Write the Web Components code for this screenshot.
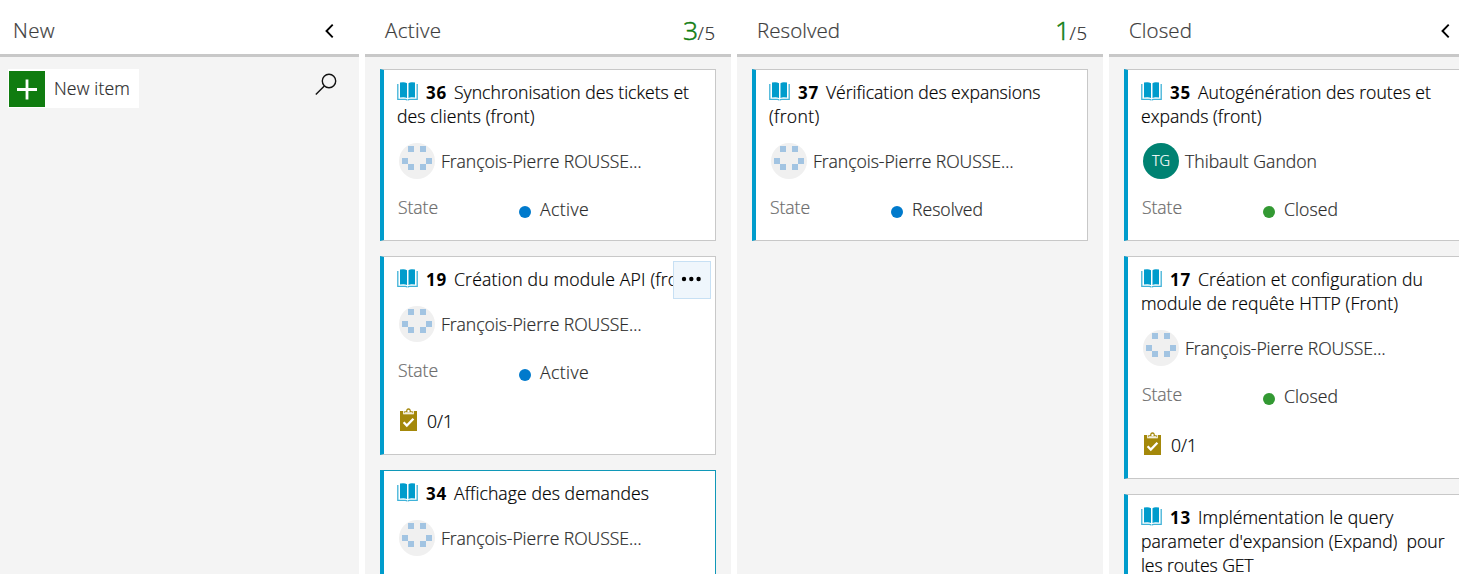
<!DOCTYPE html>
<html lang="fr">
<head>
<meta charset="utf-8">
<title>Board</title>
<style>
html,body{margin:0;height:100%;overflow:hidden;background:#fff}
body{font:300 17.6px/24px "Open Sans","Noto Sans",sans-serif;color:#2b2b2b;-webkit-text-stroke:.22px}
</style>
</head>
<body>
<kanban-board>
  <board-column heading="New" hw="42" collapsible style="--w:359px">
    <new-item-bar></new-item-bar>
  </board-column>
  <board-column heading="Active" hw="56.5" count="3" limit="5">
    <work-card person="fp" state="Active" sw="49">
      <title-line num="36" w="235">Synchronisation des tickets et</title-line>
      <title-line w="137.5">des clients (front)</title-line>
    </work-card>
    <work-card person="fp" state="Active" sw="49" tasks="0/1" menu>
      <title-line num="19" w="246">Création du module API (front)</title-line>
    </work-card>
    <work-card person="fp" selected>
      <title-line num="34" w="195">Affichage des demandes</title-line>
    </work-card>
  </board-column>
  <board-column heading="Resolved" hw="83" count="1" limit="5">
    <work-card person="fp" state="Resolved" sw="71">
      <title-line num="37" w="214.5">Vérification des expansions</title-line>
      <title-line w="50.5">(front)</title-line>
    </work-card>
  </board-column>
  <board-column heading="Closed" hw="63" collapsible>
    <work-card person="tg" state="Closed" sw="54">
      <title-line num="35" w="233">Autogénération des routes et</title-line>
      <title-line w="120.5">expands (front)</title-line>
    </work-card>
    <work-card person="fp" state="Closed" sw="54" tasks="0/1">
      <title-line num="17" w="225">Création et configuration du</title-line>
      <title-line w="257">module de requête HTTP (Front)</title-line>
    </work-card>
    <work-card>
      <title-line num="13" w="195.5">Implémentation le query</title-line>
      <title-line w="303.5">parameter d'expansion (Expand)&nbsp; pour</title-line>
      <title-line w="112.5">les routes GET</title-line>
    </work-card>
  </board-column>
</kanban-board>
<script>
const define = (name, render, after) => customElements.define(name, class extends HTMLElement {
  connectedCallback() {
    if (this.shadowRoot) return;
    this.attachShadow({ mode: 'open' }).innerHTML = render(this);
    if (after) after(this);
  }
});

/* A single line of text tracked so that it fills the given width. */
define('fit-text', () => `<style>:host{display:inline-block;white-space:pre}span{display:inline-block}</style><span><slot></slot></span>`, el => {
  const span = el.shadowRoot.querySelector('span'), w = +el.getAttribute('w');
  el.style.width = w + 'px';
  const n = el.textContent.length;
  span.style.letterSpacing = ((w - span.getBoundingClientRect().width) / n).toFixed(3) + 'px';
});

define('book-icon', () => `<style>:host{display:block;width:21px;height:19px}svg{display:block}</style>
<svg width="21" height="19" viewBox="0 0 21 19">
<path d="M.8 2v15.3h7.6q1.2 0 1.6.9M20.2 2v15.3h-7.6q-1.2 0-1.6.9" fill="none" stroke="#3fb2d8" stroke-width="1.3"/>
<path d="M3 .6Q7.5-.4 10 1.2V16Q7.500 14.700 3 15.600zM18 .6Q13.500-.4 11.500 1.200V16Q13.500 14.700 18 15.600z" fill="#009ccc"/></svg>`);

define('task-icon', () => `<style>:host{display:block;width:17px;height:23px}svg{display:block}</style>
<svg width="17" height="23" viewBox="0 0 17 23">
<path d="M0 3h17v20H0z" fill="#a4880a"/>
<path d="M3.200 3h10.600v3.300H3.200z" fill="#fff"/>
<path d="M4.200 5.200V3.300h1.900C6.200 1.300 7 .2 8.500.2s2.300 1.100 2.400 3.100h1.900v1.900z" fill="#a4880a"/>
<circle cx="8.500" cy="2.900" r="1.200" fill="#fff"/><path d="M4.800 4.300h7.400v1.200H4.800z" fill="#fff"/>
<path d="M3.600 14.300l3.200 3.200 6.600-6.800" fill="none" stroke="#fff" stroke-width="2.300"/></svg>`);

define('chevron-icon', () => `<style>:host{display:block}svg{display:block}</style>
<svg width="9" height="14" viewBox="0 0 9 14"><path d="M7.700.7L1.500 7l6.200 6.300" fill="none" stroke="#000" stroke-width="1.900"/></svg>`);

define('user-avatar', el => `<style>:host{display:block;width:36px;height:36px;border-radius:50%;overflow:hidden;flex:none}
svg{display:block}.tg{height:36px;background:#008272;color:#fff;font-size:14.500px;line-height:36px;text-align:center}</style>
${el.getAttribute('who') === 'tg' ? '<div class="tg"><fit-text w="18">TG</fit-text></div>' :
`<svg width="36" height="36"><rect width="36" height="36" fill="#f0f0f0"/><path fill="#a2c4e2" d="M9 3h6v6H9zM21 3h6v6h-6zM3 15h6v6H3zM27 15h6v6h-6zM9 21h6v6H9zM21 21h6v6h-6z"/></svg>`}`);

define('title-line', el => {
  const num = el.getAttribute('num');
  return `<style>:host{display:flex;height:24px;color:#000}book-icon{margin-top:1px}b{width:28px;margin-left:8px;font-weight:700;font-size:17px;-webkit-text-stroke:0}.t{margin-top:-1px}</style>
${num ? `<book-icon></book-icon><b><fit-text w="21">${num}</fit-text></b>` : ''}<fit-text class="t" w="${el.getAttribute('w')}">${el.textContent}</fit-text>`;
});

define('work-card', el => {
  const a = n => el.getAttribute(n), tg = a('person') === 'tg';
  return `<style>
:host{display:block;position:relative;box-sizing:border-box;min-height:172px;background:#fff;border:1px solid #c8c8c8;border-left:4px solid #009ccc;padding:11px 0 19px 13px}
:host([selected]){border-color:#1098b8;border-left-color:#009ccc}
:host([tasks]){padding-bottom:21px}
.who{display:flex;align-items:center;gap:6px;margin:14px 0 16px 2px}
.state{display:flex;height:26px;margin-left:1px}
.label{width:121px;color:#6c6c6c}
.dot{width:12px;height:12px;border-radius:50%;margin:11px 9px 0 0;background:${a('state') === 'Closed' ? '#339933' : '#007acc'}}
.value{margin-top:2px}
.tasks{display:flex;gap:10px;margin:25px 0 0 3px;height:24px;color:#000}
task-icon{margin-top:-1px}
.menu{position:absolute;right:4px;top:4px;box-sizing:border-box;width:38px;height:38px;background:#eff6fc;border:1px solid #c7e0f4}
.menu svg{display:block}
</style><slot></slot>
${a('person') ? `<div class="who"><user-avatar who="${a('person')}"></user-avatar><fit-text w="${tg ? 132 : 200.5}">${tg ? 'Thibault Gandon' : 'François-Pierre ROUSSE…'}</fit-text></div>` : ''}
${a('state') ? `<div class="state"><div class="label"><fit-text w="40">State</fit-text></div><div class="dot"></div><fit-text class="value" w="${a('sw')}">${a('state')}</fit-text></div>` : ''}
${a('tasks') ? `<div class="tasks"><task-icon></task-icon><fit-text w="26">${a('tasks')}</fit-text></div>` : ''}
${el.hasAttribute('menu') ? '<div class="menu"><svg width="36" height="36"><g fill="#000"><circle cx="10" cy="17" r="2.200"/><circle cx="17.300" cy="17" r="2.200"/><circle cx="24.600" cy="17" r="2.200"/></g></svg></div>' : ''}`;
});

define('new-item-bar', () => `<style>:host{display:flex;justify-content:space-between;margin:0 7px 0 -7px}
.btn{display:flex;align-items:center;width:131px;height:39px;background:#fff}
.plus{display:block;margin:0 9px 0 1px;background:#107c10}
.btn fit-text{margin-top:-2px}
.find{display:block;margin-top:4px}</style>
<div class="btn"><svg class="plus" width="36" height="36"><path d="M8 18.500h20M18 8.500v20" stroke="#fff" stroke-width="2.800"/></svg><fit-text w="76">New item</fit-text></div>
<svg class="find" width="22" height="23"><g fill="none" stroke="#111" stroke-width="1.400"><circle cx="14" cy="8" r="6.700"/><path d="M9.300 12.900L.8 21.500"/></g></svg>`);

define('board-column', el => {
  const a = n => el.getAttribute(n);
  return `<style>
:host{display:flex;flex-direction:column;flex:none;width:var(--w,366px);background:#f4f4f4}
header{display:flex;flex:none;justify-content:space-between;box-sizing:border-box;height:57px;background:#fff;border-bottom:3px solid #c8c8c8;padding:18px 15px 0 20px}
:host([heading=New]) header{padding-left:13px;padding-right:17px}
:host([heading=Closed]) header{padding-right:17px}
h2{margin:0;font-size:20.500px;font-weight:300;line-height:25px;color:#3c3c3c}
chevron-icon{margin:6px 8px 0 0}
.wip{display:flex;align-items:baseline;height:36px;line-height:25px}
.n{font-size:26.500px;color:#107c10;-webkit-text-stroke:.5px}
.l{font-size:18.500px}
.body{display:flex;flex-direction:column;gap:15px;padding:12px 15px 0}
</style>
<header><h2><fit-text w="${a('hw')}">${a('heading')}</fit-text></h2>
${el.hasAttribute('collapsible') ? '<chevron-icon></chevron-icon>' : `<div class="wip"><fit-text class="n" w="14.500">${a('count')}</fit-text><fit-text class="l" w="18.500">/${a('limit')}</fit-text></div>`}</header>
<div class="body"><slot></slot></div>`;
});

define('kanban-board', () => `<style>:host{display:flex;gap:6px;height:100vh;overflow:hidden}</style><slot></slot>`);
</script>
</body>
</html>
